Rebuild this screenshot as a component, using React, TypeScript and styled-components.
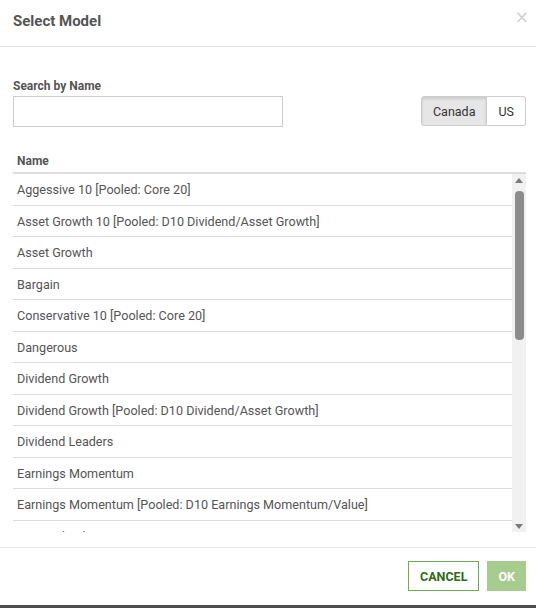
import React from "react";
import styled, { createGlobalStyle } from "styled-components";

const models = [
  "Aggessive 10 [Pooled: Core 20]",
  "Asset Growth 10 [Pooled: D10 Dividend/Asset Growth]",
  "Asset Growth",
  "Bargain",
  "Conservative 10 [Pooled: Core 20]",
  "Dangerous",
  "Dividend Growth",
  "Dividend Growth [Pooled: D10 Dividend/Asset Growth]",
  "Dividend Leaders",
  "Earnings Momentum",
  "Earnings Momentum [Pooled: D10 Earnings Momentum/Value]",
  "Focused Value",
  "Growth",
  "Income",
];

const GlobalStyle = createGlobalStyle`
  body {
    margin: 0;
    background: #4d4d4d;
    font-family: Roboto, "Liberation Sans", sans-serif;
  }
`;

const Modal = styled.div`
  width: 536px;
  height: 605px;
  background: #fff;
  display: flex;
  flex-direction: column;
  box-sizing: border-box;
`;

const Header = styled.div`
  height: 47px;
  box-sizing: border-box;
  padding: 12px 13px 0;
  border-bottom: 1px solid #e5e5e5;
  display: flex;
  justify-content: space-between;
  align-items: flex-start;
`;

const Title = styled.h4`
  margin: 0;
  font-size: 15px;
  line-height: 18px;
  font-weight: 700;
  color: #555;
`;

const Close = styled.button`
  border: none;
  background: none;
  padding: 0;
  margin: -4px -6px 0 0;
  font-size: 17px;
  line-height: 18px;
  color: #d0d0d0;
  font-family: "DejaVu Sans", sans-serif;
`;

const Body = styled.div`
  flex: 1;
  padding: 32px 10px 0 13px;
  display: flex;
  flex-direction: column;
`;

const Label = styled.label`
  font-size: 12px;
  font-weight: 700;
  color: #555;
  line-height: 14px;
  margin-bottom: 3px;
`;

const SearchRow = styled.div`
  display: flex;
  justify-content: space-between;
  align-items: flex-start;
`;

const SearchInput = styled.input`
  width: 270px;
  height: 31px;
  box-sizing: border-box;
  border: 1px solid #ccc;
  padding: 4px 8px;
  font-size: 13px;
  outline: none;
`;

const Toggle = styled.div`
  display: flex;
`;

const ToggleButton = styled.button<{ $active?: boolean }>`
  height: 30px;
  box-sizing: border-box;
  padding: 0 11px;
  font-family: Roboto, "Liberation Sans", sans-serif;
  font-size: 12.5px;
  color: #333;
  border: 1px solid #ccc;
  background: ${(p) => (p.$active ? "#e6e6e6" : "#fff")};
  box-shadow: ${(p) => (p.$active ? "inset 0 2px 3px rgba(0,0,0,0.12)" : "none")};
  & + & {
    border-left: none;
  }
  &:first-child {
    border-radius: 3px 0 0 3px;
  }
  &:last-child {
    border-radius: 0 3px 3px 0;
  }
`;

const TableHead = styled.div`
  margin-top: 22px;
  height: 25px;
  box-sizing: border-box;
  padding: 5px 4px 0;
  border-bottom: 2px solid #ddd;
  font-size: 12px;
  font-weight: 700;
  color: #555;
  line-height: 14px;
`;

const TableScroll = styled.div`
  height: 358px;
  display: flex;
`;

const Rows = styled.div`
  flex: 1;
  overflow: hidden;
`;

const Row = styled.div`
  padding: 8px 4px 7.5px;
  line-height: 15px;
  font-size: 12.6px;
  color: #555;
  border-bottom: 1px solid #ddd;
  white-space: nowrap;
`;

const Scrollbar = styled.div`
  width: 14px;
  background: #f1f1f1;
  display: flex;
  flex-direction: column;
  align-items: center;
  padding: 4px 0 3px;
  box-sizing: border-box;
`;

const Arrow = styled.div<{ $down?: boolean }>`
  width: 0;
  height: 0;
  border-left: 4px solid transparent;
  border-right: 4px solid transparent;
  ${(p) =>
    p.$down
      ? "border-top: 5px solid #7a7a7a;"
      : "border-bottom: 5px solid #7a7a7a;"}
`;

const Thumb = styled.div`
  width: 9px;
  height: 149px;
  margin-top: 8px;
  border-radius: 4px;
  background: #8c8c8c;
`;

const Spacer = styled.div`
  flex: 1;
`;

const Footer = styled.div`
  height: 58px;
  box-sizing: border-box;
  border-top: 1px solid #e5e5e5;
  padding: 13px 10px 0;
  display: flex;
  justify-content: flex-end;
  gap: 8px;
`;

const FooterButton = styled.button<{ $primary?: boolean }>`
  height: 30px;
  box-sizing: border-box;
  padding: 0 ${(p) => (p.$primary ? "10px" : "11px")};
  font-family: Roboto, "Liberation Sans", sans-serif;
  font-size: 12.5px;
  font-weight: 700;
  border: 1px solid ${(p) => (p.$primary ? "#a6cd8e" : "#6fa84e")};
  background: ${(p) => (p.$primary ? "#a6cd8e" : "#fff")};
  color: ${(p) => (p.$primary ? "#fff" : "#2f6a17")};
`;

const App = () => {
  return (
    <>
      <GlobalStyle />
      <Modal>
        <Header>
          <Title>Select Model</Title>
          <Close>×</Close>
        </Header>
        <Body>
          <Label>Search by Name</Label>
          <SearchRow>
            <SearchInput />
            <Toggle>
              <ToggleButton $active>Canada</ToggleButton>
              <ToggleButton>US</ToggleButton>
            </Toggle>
          </SearchRow>
          <TableHead>Name</TableHead>
          <TableScroll>
            <Rows>
              {models.map((m) => (
                <Row key={m}>{m}</Row>
              ))}
            </Rows>
            <Scrollbar>
              <Arrow />
              <Thumb />
              <Spacer />
              <Arrow $down />
            </Scrollbar>
          </TableScroll>
        </Body>
        <Footer>
          <FooterButton>CANCEL</FooterButton>
          <FooterButton $primary disabled>
            OK
          </FooterButton>
        </Footer>
      </Modal>
    </>
  );
};

export default App;
